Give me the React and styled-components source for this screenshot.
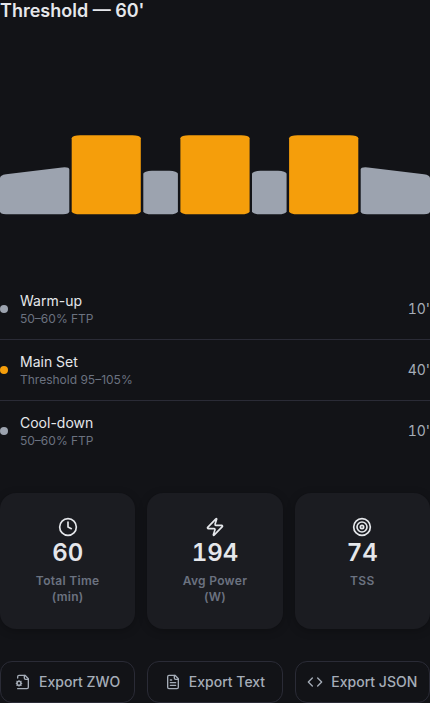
import React from "react";
import styled, { createGlobalStyle } from "styled-components";
import { Clock, Zap, Target, Code } from "lucide-react";

const GlobalStyle = createGlobalStyle`
  * { box-sizing: border-box; }
  html, body { margin: 0; background: #121317; }
  body {
    font-family: Inter, "Liberation Sans", sans-serif;
    color: #e5e7eb;
    overflow: hidden;
  }
`;

const Page = styled.main`
  width: 430px;
  height: 703px;
  overflow: hidden;
`;

const Title = styled.h1`
  margin: -3px 0 0;
  font-size: 18px;
  line-height: 27px;
  font-weight: 600;
`;

const Chart = styled.svg`
  display: block;
  width: 430px;
  height: 200px;
  margin-top: 31px;
`;

const StepList = styled.ul`
  list-style: none;
  margin: 24px 0 0;
  padding: 0;
`;

const Step = styled.li`
  display: flex;
  align-items: center;
  gap: 12px;
  height: 61px;
  border-bottom: 1px solid #2a2b36;
  &:last-child { border-bottom-color: transparent; }
`;

const Dot = styled.span`
  width: 8px;
  height: 8px;
  border-radius: 50%;
  background: ${(p) => p.$color};
`;

const StepText = styled.div`
  flex: 1;
`;

const StepName = styled.div`
  font-size: 14px;
  line-height: 20px;
`;

const StepDetail = styled.div`
  font-size: 12px;
  line-height: 16px;
  color: #6b7280;
`;

const Duration = styled.span`
  font-size: 14px;
  line-height: 20px;
  color: #a5adb8;
  font-variant-numeric: tabular-nums;
`;

const Columns = styled.div`
  display: grid;
  grid-template-columns: repeat(3, 1fr);
  gap: 12px;
  margin-top: ${(p) => p.$top}px;
`;

const StatCard = styled.section`
  height: 136px;
  padding: 24px 24px 0;
  border-radius: 16px;
  background: #1b1c21;
  box-shadow: 0 2px 8px rgba(0, 0, 0, 0.25);
  display: flex;
  flex-direction: column;
  align-items: center;
  text-align: center;
`;

const StatValue = styled.div`
  margin-top: 3px;
  font-size: 24px;
  line-height: 25px;
  font-weight: 600;
  font-variant-numeric: tabular-nums;
`;

const StatLabel = styled.div`
  margin-top: 8px;
  font-size: 12px;
  line-height: 16px;
  font-weight: 600;
  letter-spacing: 0.3px;
  color: #6b7280;
`;

const ExportButton = styled.button`
  display: flex;
  align-items: center;
  justify-content: center;
  gap: 8px;
  height: 42px;
  padding: 0;
  border: 1px solid #2a2b36;
  border-radius: 12px;
  background: transparent;
  color: #a5adb8;
  font: 500 14px/20px Inter, "Liberation Sans", sans-serif;
  white-space: nowrap;
`;

const LineIcon = styled.svg.attrs({
  viewBox: "0 0 24 24",
  width: 16,
  height: 16,
  fill: "none",
  stroke: "currentColor",
  strokeWidth: 2,
  strokeLinecap: "round",
  strokeLinejoin: "round",
})``;

function FileCogIcon() {
  return (
    <LineIcon>
      <path d="M4 22h14a2 2 0 0 0 2-2V7l-5-5H6a2 2 0 0 0-2 2v2" />
      <path d="M14 2v4a2 2 0 0 0 2 2h4" />
      <circle cx="6" cy="14" r="3" />
      <path d="M6 10v1M6 17v1M10 14H9M3 14H2M9 11l-.88.88M3.88 16.12 3 17M9 17l-.88-.88M3.88 11.88 3 11" />
    </LineIcon>
  );
}

function FileTextIcon() {
  return (
    <LineIcon>
      <path d="M15 2H6a2 2 0 0 0-2 2v16a2 2 0 0 0 2 2h12a2 2 0 0 0 2-2V7Z" />
      <path d="M14 2v4a2 2 0 0 0 2 2h4M10 9H8M16 13H8M16 17H8" />
    </LineIcon>
  );
}

const GREY = "#9ca3af";
const AMBER = "#f59e0b";

const steps = [
  { name: "Warm-up", detail: "50–60% FTP", time: "10'", color: GREY },
  { name: "Main Set", detail: "Threshold 95–105%", time: "40'", color: AMBER },
  { name: "Cool-down", detail: "50–60% FTP", time: "10'", color: GREY },
];

const stats = [
  { icon: Clock, value: "60", label: "Total Time (min)" },
  { icon: Zap, value: "194", label: "Avg Power (W)" },
  { icon: Target, value: "74", label: "TSS" },
];

const exportsList = [
  { icon: FileCogIcon, label: "Export ZWO" },
  { icon: FileTextIcon, label: "Export Text" },
  { icon: Code, label: "Export JSON" },
];

const blocks = [
  { x: 71.7, w: 69.1, y: 80.2, color: AMBER },
  { x: 143.3, w: 34.6, y: 115.8, color: GREY },
  { x: 180.4, w: 69.2, y: 80.2, color: AMBER },
  { x: 252, w: 34.6, y: 115.8, color: GREY },
  { x: 289.1, w: 69.2, y: 80.2, color: AMBER },
];

const BASE = 159.3;

export default function App() {
  return (
    <Page>
      <GlobalStyle />
      <Title>Threshold — 60'</Title>
      <Chart viewBox="0 0 430 200">
        <path
          d="M0 123 Q0 120.3 6 119.3 L62 112.5 Q69.3 111.8 69.3 114.5 V156.3 Q69.3 159.3 63 159.3 H6 Q0 159.3 0 156.3 Z"
          fill={GREY}
        />
        {blocks.map((b) => (
          <rect key={b.x} x={b.x} y={b.y} width={b.w} height={BASE - b.y} rx="8.5" ry="3" fill={b.color} />
        ))}
        <path
          d="M430 123 Q430 120.3 424 119.3 L368 112.5 Q360.7 111.8 360.7 114.5 V156.3 Q360.7 159.3 367 159.3 H424 Q430 159.3 430 156.3 Z"
          fill={GREY}
        />
      </Chart>
      <StepList>
        {steps.map((s) => (
          <Step key={s.name}>
            <Dot $color={s.color} />
            <StepText>
              <StepName>{s.name}</StepName>
              <StepDetail>{s.detail}</StepDetail>
            </StepText>
            <Duration>{s.time}</Duration>
          </Step>
        ))}
      </StepList>
      <Columns $top={31}>
        {stats.map(({ icon: Icon, value, label }) => (
          <StatCard key={label}>
            <Icon size={20} />
            <StatValue>{value}</StatValue>
            <StatLabel>{label}</StatLabel>
          </StatCard>
        ))}
      </Columns>
      <Columns $top={32}>
        {exportsList.map(({ icon: Icon, label }) => (
          <ExportButton key={label}>
            <Icon size={16} />
            {label}
          </ExportButton>
        ))}
      </Columns>
    </Page>
  );
}
